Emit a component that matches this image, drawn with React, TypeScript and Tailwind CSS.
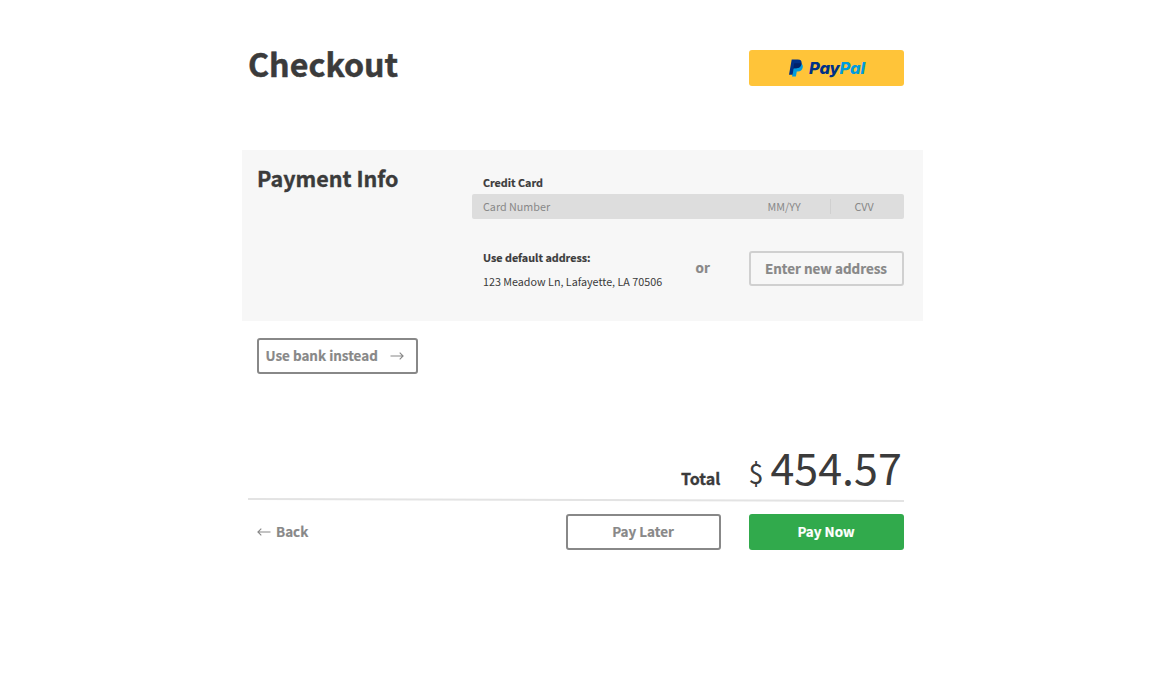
function PayPalMark() {
  return (
    <svg className="h-[18px] w-[14px] shrink-0" viewBox="0 0 14 18" aria-hidden="true">
      <path d="M3.7 4.2h6.9c2.7.3 3.5 1.9 3.1 4.200-.5 2.700-2.300 4-4.900 4H7.800L6.900 17.600H3l.4-2.200z" fill="#009cde" />
      <path d="M2.700.500h6.100c3 0 4.200 1.600 3.800 4.200-.5 3.100-2.500 4.500-5.400 4.500H5.400c-.5 0-.8.300-.9.800L3.600 15.800H0z" fill="#003087" />
      <path d="M5.200 4.300h5.800c.6 0 1.100.1 1.500.3-.5 3.200-2.500 4.600-5.300 4.600H4.500z" fill="#012169" />
    </svg>
  );
}

function Arrow({ left = false }: { left?: boolean }) {
  return (
    <svg className="h-2.5 w-3.5 shrink-0" viewBox="0 0 14 10" fill="none" stroke="#888" strokeWidth="1.1" aria-hidden="true">
      <path d={left ? "M13.5 5H1M4.300 1.600L.9 5l3.400 3.400" : "M.5 5H13M9.700 1.600L13.100 5L9.700 8.400"} />
    </svg>
  );
}

export default function App() {
  return (
    <main className="flex h-[700px] w-[1152px] flex-col items-start overflow-hidden bg-white pl-[242px] font-['Noto_Sans_CJK_SC',sans-serif] text-[#3b3b3b]">
      <header className="flex h-[150px] w-[662px] items-start justify-between pt-[50px] pl-1.5">
        <h1 className="text-[32.2px] leading-[26px] font-bold [-webkit-text-stroke:0.5px]">Checkout</h1>
        <button className="flex h-9 w-[155px] items-center justify-center gap-[6px] rounded-[3px] bg-[#ffc439] pl-px" aria-label="PayPal">
          <PayPalMark />
          <span className="font-['Inter',sans-serif] text-[16.5px] leading-[18px] font-extrabold tracking-[-0.15px] text-[#003087] italic">
            Pay<span className="text-[#009cde]">Pal</span>
          </span>
        </button>
      </header>

      <section className="flex h-[171px] w-[681px] bg-[#f7f7f7] pl-[15px]">
        <h2 className="w-[215px] pt-[13px] text-[21.5px] leading-[30px] font-bold [-webkit-text-stroke:0.35px]">Payment Info</h2>
        <div className="w-[432px] pt-6 text-[10.75px] leading-[18px]">
          <p className="h-5 pl-[11px] font-bold [-webkit-text-stroke:0.2px]">Credit Card</p>
          <div className="flex h-[25px] items-center rounded-[2px] bg-[#ddd] pl-[11px] text-[#888]">
            <span className="w-[284.5px]">Card Number</span>
            <span className="w-[62.5px]">MM/YY</span>
            <span className="h-[15px] w-px bg-[#d0d0d0]" />
            <span className="pl-[23.5px]">CVV</span>
          </div>
          <div className="flex pt-[30px]">
            <div className="w-[223.5px] pl-[11px]">
              <p className="font-bold [-webkit-text-stroke:0.2px]">Use default address:</p>
              <p className="pt-[6px]">123 Meadow Ln, Lafayette, LA 70506</p>
            </div>
            <span className="w-[53.5px] pt-[8px] text-[13.450px] leading-5 font-bold text-[#888] [-webkit-text-stroke:0.2px]">or</span>
            <button className="mt-[2px] h-[35px] w-[155px] rounded-[3px] border-2 border-[#d0d0d0] pr-px pb-[2px] text-[13.450px] leading-5 font-bold text-[#888] [-webkit-text-stroke:0.2px]">
              Enter new address
            </button>
          </div>
        </div>
      </section>

      <button className="mt-[17px] ml-[15px] flex h-9 w-[161px] items-center gap-3 rounded-[3px] border-2 border-[#888] pl-[6.5px] text-[13.450px] leading-5 font-bold text-[#888] [-webkit-text-stroke:0.2px]">
        <span className="pb-[2px]">Use bank instead</span>
        <Arrow />
      </button>

      <div className="mt-[67px] ml-1.5 flex h-[57px] w-[656px] items-baseline justify-end">
        <span className="w-[67.5px] text-[16.100px] leading-[50px] font-bold [-webkit-text-stroke:0.3px]">Total</span>
        <span className="w-[22px] -translate-y-px text-[26.800px] leading-[50px]">$</span>
        <span className="w-[133.5px] text-[43px] leading-[50px]">454.57</span>
      </div>
      <svg className="ml-1.5 h-1.5 w-[656px] shrink-0" viewBox="0 0 656 6" aria-hidden="true">
        <line x1="0" y1="1" x2="656" y2="3" stroke="#e3e3e3" strokeWidth="2" />
      </svg>

      <footer className="mt-[10px] ml-[15px] flex h-9 w-[647px] text-[13.450px] leading-5 font-bold text-[#888] [-webkit-text-stroke:0.2px]">
        <button className="flex w-[309px] items-center gap-[5px]">
          <Arrow left />
          <span className="pb-[2px]">Back</span>
        </button>
        <button className="mr-7 w-[155px] rounded-[3px] border-2 border-[#888] pr-px pb-[2px]">Pay Later</button>
        <button className="w-[155px] rounded-[3px] bg-[#31aa4c] pr-px pb-[2px] text-white">Pay Now</button>
      </footer>
    </main>
  );
}
